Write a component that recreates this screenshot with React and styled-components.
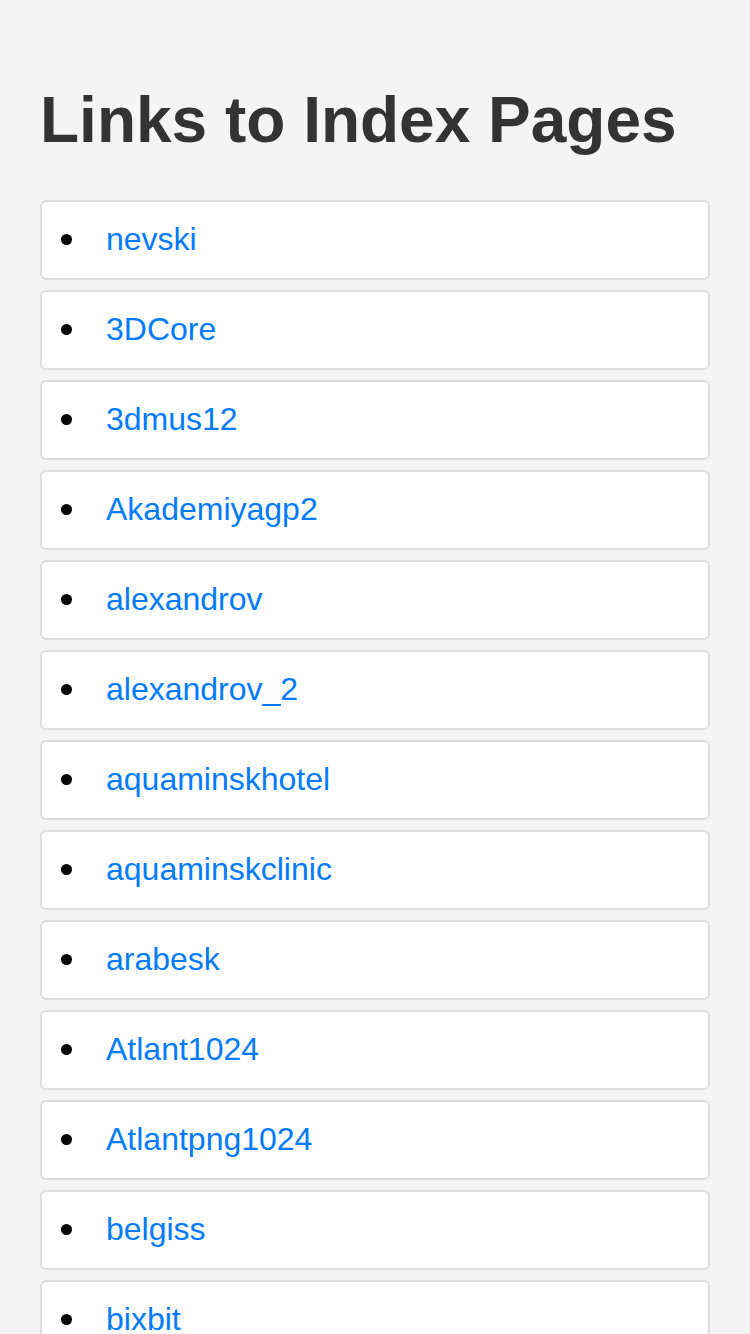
import styled, { createGlobalStyle } from 'styled-components';

const pages = [
    'nevski', '3DCore', '3dmus12', 'Akademiyagp2', 'alexandrov', 'alexandrov_2',
    'aquaminskhotel', 'aquaminskclinic', 'arabesk', 'Atlant1024', 'Atlantpng1024',
    'belgiss', 'bixbit',
];

const GlobalStyle = createGlobalStyle`
    body {
        margin: 0;
        padding: 40px;
        background: #f4f4f4;
        font-family: "Liberation Sans", Arial, sans-serif;
    }
`;

const Title = styled.h1`
    margin: 0.67em 0;
    font-size: 64px;
    font-weight: bold;
    color: #333333;
`;

const List = styled.ul`
    list-style: none;
    margin: 0;
    padding: 0;
`;

const Item = styled.li`
    display: flex;
    align-items: center;
    box-sizing: border-box;
    height: 80px;
    margin-bottom: 10px;
    padding: 0 19px;
    background: #ffffff;
    border: 2px solid #dddddd;
    border-radius: 6px;
    font-size: 32px;
`;

const Bullet = styled.span`
    width: 11px;
    height: 11px;
    margin-right: 34px;
    border-radius: 50%;
    background: #000000;
    flex-shrink: 0;
`;

const Link = styled.a`
    color: #007bff;
    text-decoration: none;
`;

const App = () => {
    return (
        <>
            <GlobalStyle />
            <Title>Links to Index Pages</Title>
            <List>
                {pages.map((name) => (
                    <Item key={name}>
                        <Bullet />
                        <Link href="#">{name}</Link>
                    </Item>
                ))}
            </List>
        </>
    );
};

export default App;
